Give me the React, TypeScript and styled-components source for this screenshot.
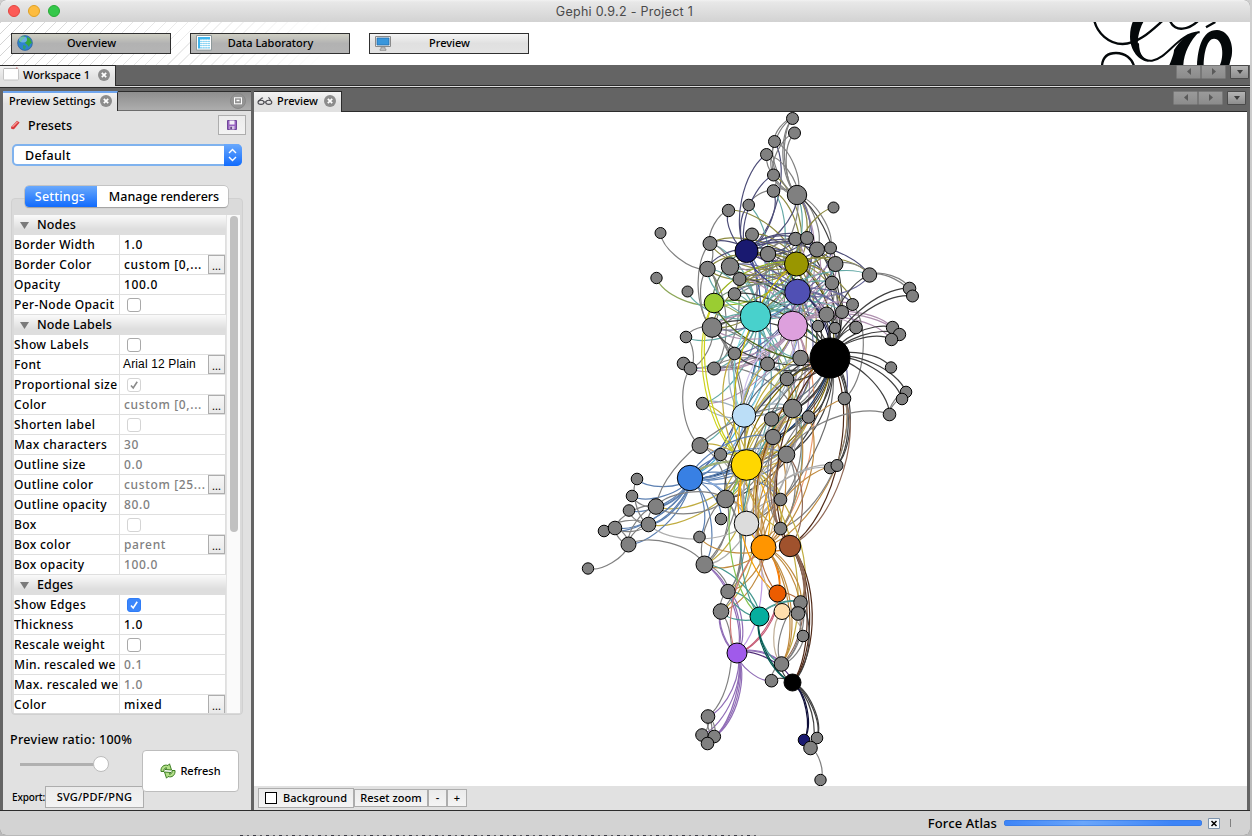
import React from "react";
import styled, { createGlobalStyle, css } from "styled-components";

const Global = createGlobalStyle`
  * { box-sizing: border-box; }
  html, body { margin: 0; padding: 0; background: #c4c4c4; overflow: hidden; }
  body { font-family: "Noto Sans", "Open Sans", sans-serif; color: #000; }
`;

/* ---------- window chrome ---------- */
const Desktop = styled.div`
  width: 1252px;
  height: 836px;
  padding-right: 2px;
  background: repeating-linear-gradient(90deg, #3a3a44 0 3px, #b9b9b9 3px 7px, #55555c 7px 9px, #c4c4c4 9px 13px) 240px 835px / 520px 1px no-repeat,
    linear-gradient(#cfcfcf, #b9b9b9);
`;
const Window = styled.div`
  width: 1250px;
  height: 835px;
  display: flex;
  flex-direction: column;
  border-radius: 6px;
  overflow: hidden;
  background: #646464;
`;
const TitleBar = styled.header`
  height: 22px;
  flex: none;
  display: grid;
  grid-template-columns: 1fr auto 1fr;
  align-items: center;
  padding: 0 9px 0 8px;
  background: linear-gradient(#f2f2f2, #e8e8e8 2px, #d2d2d2);
`;
const Lights = styled.div`
  display: flex;
  gap: 8px;
`;
const Light = styled.i<{ $fill: string; $edge: string }>`
  width: 12px;
  height: 12px;
  border-radius: 50%;
  background: ${(p) => p.$fill};
  border: 1px solid ${(p) => p.$edge};
`;
const Title = styled.h1`
  margin: 2px 0 0;
  font: 400 12.5px/20px Inter, sans-serif;
  letter-spacing: 0.28px;
  color: #4a4a4a;
`;

/* ---------- perspective toolbar ---------- */
const Banner = styled.nav`
  height: 43px;
  flex: none;
  display: flex;
  align-items: center;
  gap: 19px;
  padding: 0 8px 0 11px;
  background: linear-gradient(90deg, rgba(255, 255, 255, 0), #fff 330px),
    repeating-linear-gradient(135deg, #d4d4d4 0 1px, #fff 1px 7.8px);
`;
const Perspective = styled.button<{ $active?: boolean }>`
  width: 160px;
  height: 21px;
  padding: 0 0 1px 5px;
  display: grid;
  grid-template-columns: 16px 1fr 20px;
  align-items: center;
  border: 1px solid #303030;
  font: 500 11px/16px "Noto Sans", sans-serif;
  color: #000;
  background: ${(p) =>
    p.$active ? "linear-gradient(#f4f4f4, #e0e0e0 50%, #e3e3e3)" : "linear-gradient(#cfcfc4, #b2b2b2 50%, #b4b4b4)"};
`;
const Spacer = styled.div`
  flex: 1;
`;
const Logo = styled.svg`
  flex: none;
  width: 150px;
  height: 43px;
`;

/* ---------- tabs ---------- */
const WorkspaceBar = styled.div`
  height: 23px;
  flex: none;
  display: flex;
  justify-content: space-between;
  background: linear-gradient(#646464 20px, #2c2c2c 20px 21px, #dcdcdc 21px 22px, #2c2c2c 22px);
`;
const TabStrip = styled.div`
  height: 21px;
  flex: none;
  display: flex;
  justify-content: space-between;
  background: linear-gradient(#646464 20px, #2c2c2c 20px);
`;
const Tab = styled.div<{ $w: number; $focus?: boolean }>`
  width: ${(p) => p.$w}px;
  height: ${(p) => (p.$focus ? 20 : 21)}px;
  display: flex;
  align-items: center;
  padding: 0 0 3px ${(p) => (p.$focus ? 6 : 3)}px;
  gap: 4px;
  font-weight: 500;
  font-size: 11px;
  white-space: nowrap;
  border-right: 1px solid #2c2c2c;
  border-top: ${(p) => (p.$focus ? "2px solid #6fa5ee" : "1px solid #2c2c2c")};
  background: linear-gradient(#f3f3f3, #e1e1e1 60%);
  svg:last-child {
    margin-left: auto;
    margin-right: 5px;
  }
`;
const Pager = styled.div`
  display: flex;
  margin-right: 1px;
`;
const PagerButton = styled.button<{ $menu?: boolean }>`
  width: ${(p) => (p.$menu ? 19 : 25)}px;
  height: 14px;
  margin-left: ${(p) => (p.$menu ? 4 : 0)}px;
  padding: 0;
  display: grid;
  place-items: center;
  border: 1px solid ${(p) => (p.$menu ? "#4a4a4a" : "#787878")};
  border-radius: 1px;
  background: ${(p) => (p.$menu ? "linear-gradient(#b4b4b4, #8e8e8e)" : "linear-gradient(#9a9a9a, #8c8c8c)")};
`;

/* ---------- workspace ---------- */
const Work = styled.main`
  height: 722px;
  flex: none;
  display: grid;
  grid-template-columns: 248px 993px;
  column-gap: 3px;
  padding: 3px 3px 0;
  background: #646464;
`;
const Side = styled.aside`
  display: flex;
  flex-direction: column;
  background: #e1e1e1;
  overflow: hidden;
`;
const SideTabs = styled.div`
  height: 20px;
  flex: none;
  display: flex;
  justify-content: space-between;
  align-items: center;
  padding-right: 5px;
  background: linear-gradient(#2c2c2c 1px, #8e8e8e 1px, #adadad 19px, #6c6c6c 19px);
`;
const SideBody = styled.div`
  flex: 1;
  display: flex;
  flex-direction: column;
  padding: 4px 5px 0 8px;
`;
const PresetRow = styled.div`
  height: 20px;
  display: flex;
  align-items: center;
  font-size: 12.5px;
  font-weight: 500;
  span { margin-left: 8px; flex: 1; }
`;
const IconButton = styled.button`
  width: 28px;
  height: 20px;
  padding: 0;
  border: 1px solid #adadad;
  background: linear-gradient(#ececec, #f3f3f3);
  display: grid;
  place-items: center;
`;
const Select = styled.div`
  width: 230px;
  height: 22px;
  margin: 9px 0 0 1px;
  display: flex;
  justify-content: space-between;
  border-radius: 5px;
  border: 2px solid #7fb2ee;
  background: #fff;
  padding-left: 11px;
  font-size: 12.5px;
  font-weight: 500;
  line-height: 19px;
  letter-spacing: 0.25px;
  svg { margin: -2px; border-radius: 0 5px 5px 0; }
`;
const Group = styled.section`
  position: relative;
  margin: 32px 0 0;
  width: 232px;
  height: 517px;
  padding: 16px 2px 1px 2px;
  border: 1px solid #d0d0d0;
  border-radius: 4px;
  background: #dadada;
`;
const Segments = styled.div`
  position: absolute;
  left: 13px;
  top: -13px;
  width: 203px;
  height: 21px;
  display: grid;
  grid-template-columns: 72px 1fr;
  border-radius: 4px;
  overflow: hidden;
  box-shadow: 0 0 0 0.5px #a8a8a8, 0 1px 1px #9c9c9c;
  background: #fff;
  text-align: center;
  font-size: 12.5px;
  font-weight: 500;
  line-height: 21px;
`;
const Segment = styled.span<{ $on?: boolean }>`
  padding-left: ${(p) => (p.$on ? 0 : 3)}px;
  ${(p) => p.$on && css`color: #fff; letter-spacing: 0.2px; padding-right: 2px; background: linear-gradient(#6aa9fc, #116bfd);`}
`;
const Scroll = styled.div`
  height: 498px;
  display: grid;
  grid-template-columns: 212px 14px;
  overflow: hidden;
  background: #e1e1e1;
`;
const Track = styled.div`
  border-left: 1px solid #e4e4e4;
  background: #fafafa;
  padding: 1px 0 0 3px;
`;
const Thumb = styled.div`
  width: 8px;
  height: 316px;
  border-radius: 4px;
  background: #c1c1c1;
`;
const Header = styled.div`
  height: 20px;
  padding: 0 0 2px 6px;
  display: flex;
  align-items: center;
  gap: 8px;
  font-size: 12.5px;
  font-weight: 500;
  letter-spacing: 0.1px;
  background: linear-gradient(#fafafa, #dedede 70%);
  svg { margin-top: 2px; }
`;
const Row = styled.div<{ $dim?: boolean }>`
  height: 20px;
  display: grid;
  grid-template-columns: 105px 105px;
  column-gap: 1px;
  border-bottom: 1px solid #dfdfdf;
  background: #dfdfdf;
  font-size: 12px;
  font-weight: 500;
  line-height: 19px;
  white-space: nowrap;
  & > span { background: #fff; overflow: hidden; letter-spacing: 0.38px; }
  & > div { color: ${(p) => (p.$dim ? "#808080" : "#000")}; }
`;
const Value = styled.div<{ $arial?: boolean }>`
  background: #fff;
  display: flex;
  align-items: center;
  justify-content: space-between;
  padding: 0 0 0 4px;
  letter-spacing: 0.65px;
  ${(p) => p.$arial && css`font-family: "Liberation Sans", sans-serif; letter-spacing: 0.15px; padding-left: 3px;`}
`;
const More = styled.button`
  width: 17px;
  height: 19px;
  padding: 0;
  border: 1px solid #adadad;
  background: linear-gradient(#f6f6f6, #e9e9e9);
  font: 400 11px/20px "Noto Sans", sans-serif;
`;
const Box = styled.span<{ $on?: boolean; $dim?: boolean }>`
  width: 14px;
  height: 14px;
  margin-left: 3px;
  border-radius: 3px;
  border: 1px solid ${(p) => (p.$on ? "#2f7cf6" : p.$dim ? "#d4d4d4" : "#a9a9a9")};
  background: ${(p) => (p.$on ? "#3b86fb" : "#fff")};
  display: grid;
  place-items: center;
`;
const Footer = styled.div`
  display: grid;
  grid-template-columns: 131px 97px;
`;
const Ratio = styled.div`
  margin: 14px 0 0 -1px;
  height: 22px;
  font-size: 12.5px;
  font-weight: 500;
  line-height: 22px;
  letter-spacing: 0.3px;
`;
const Slider = styled.div`
  width: 89px;
  height: 17px;
  margin: 5px 0 0 9px;
  display: flex;
  justify-content: flex-end;
  background: linear-gradient(#b0b0b0, #b0b0b0) 0 7px / 76px 3px no-repeat;
  i {
    width: 16px;
    height: 16px;
    border-radius: 50%;
    background: #fff;
    border: 1px solid #bcbcbc;
  }
`;
const ExportRow = styled.div`
  display: grid;
  grid-template-columns: 33px 99px;
  align-items: center;
  margin: 13px 0 0 1px;
  font-size: 10px;
  letter-spacing: -0.15px;
  font-weight: 500;
  white-space: nowrap;
`;
const FlatButton = styled.button<{ $w: number; $h?: number; $track?: number }>`
  width: ${(p) => p.$w}px;
  height: ${(p) => p.$h ?? 18}px;
  flex: none;
  padding: 0;
  display: flex;
  align-items: center;
  justify-content: center;
  gap: 6px;
  border: 1px solid #adadad;
  background: linear-gradient(#ebebeb, #f4f4f4);
  font: 500 11px/14px "Noto Sans", sans-serif;
  letter-spacing: ${(p) => p.$track ?? 0}px;
  color: #000;
  white-space: nowrap;
`;
const Refresh = styled.button`
  align-self: start;
  width: 97px;
  height: 42px;
  margin-top: 35px;
  display: flex;
  align-items: center;
  justify-content: center;
  gap: 4px;
  padding: 0;
  border: 1px solid #bdbdbd;
  border-radius: 4px;
  background: #fff;
  font: 500 11px/16px "Noto Sans", sans-serif;
  color: #000;
  z-index: 1;
`;

const Stage = styled.section`
  display: flex;
  flex-direction: column;
`;
const Canvas = styled.svg`
  flex: none;
  width: 993px;
  height: 674px;
  background: #fff;
`;
const StageBar = styled.div`
  height: 24px;
  display: flex;
  align-items: center;
  padding-left: 4px;
  background: #e1e1e1;
`;
const Swatch = styled.i`
  width: 12px;
  height: 12px;
  border: 1px solid #000;
  background: #fff;
`;
const Status = styled.footer`
  height: 25px;
  flex: none;
  display: flex;
  align-items: center;
  justify-content: flex-end;
  padding-right: 19px;
  border-top: 1px solid #2c2c2c;
  background: #d3d3d3;
  font-size: 13px;
  font-weight: 500;
  letter-spacing: 0.1px;
`;
const Progress = styled.div`
  width: 198px;
  height: 6px;
  margin: 0 6px 0 7px;
  border-radius: 3px;
  background: linear-gradient(90deg, #3d84f7, #6aa6fb 40%, #3d84f7 85%);
  box-shadow: inset 0 0 0 0.5px #3576dd;
`;
const Grip = styled.i`
  width: 1px;
  height: 8px;
  margin-left: 10px;
  background: #808080;
`;

/* ---------- small drawings ---------- */
const Close = () => (
  <svg width="12" height="12" viewBox="0 0 12 12">
    <circle cx="6" cy="6" r="6" fill="#8c8c8c" />
    <path d="M3.8 3.8l4.4 4.4M8.2 3.8L3.8 8.2" stroke="#fff" strokeWidth="1.7" />
  </svg>
);
const Globe = () => (
  <svg width="16" height="16" viewBox="0 0 16 16">
    <circle cx="8" cy="8" r="7.4" fill="#2f83cf" stroke="#2b5f96" strokeWidth=".7" />
    <path d="M3 3Q5 1 8 1L7.500 3 5.500 4.500 4 7 2 7.500zM10 2l3 1.500 2 4.500-2 1-1 3-2-2.500-2-1.500 2-2.500z" fill="#35a83c" />
    <path d="M6 10l3 1-1 3.500-2-1z" fill="#2fa06a" />
    <ellipse cx="6" cy="4.5" rx="4" ry="3" fill="#9fd6fa" opacity=".55" />
  </svg>
);
const Sheet = () => (
  <svg width="16" height="16" viewBox="0 0 16 16">
    <path d="M.5.5h15v14.6H.5z" fill="#fff" stroke="#8f9a9c" />
    <path d="M2 2h12v2H2zM2 4h2v9.500H2z" fill="#3fb5ee" />
    <path d="M4 4h10v9.500H4z" fill="#a9e0f8" />
    <path d="M4 5.500h10M4 7.500h10M4 9.500h10M4 11.500h10M6.500 4v9.500M9 4v9.500M11.500 4v9.500" stroke="#fff" strokeWidth=".8" />
    <path d="M4 4.500h10M4 6.500h10M4 8.500h10M4 10.500h10M4 12.800h10" stroke="#79cdf2" strokeWidth=".6" />
  </svg>
);
const Monitor = () => (
  <svg width="16" height="16" viewBox="0 0 16 16">
    <path d="M.5 1.5h15v10H.5z" fill="#e8e8e8" stroke="#8a8a8a" />
    <path d="M2 3h12v7H2z" fill="#3a97dc" stroke="#2067a8" strokeWidth=".7" />
    <path d="M6 12h4v2h1v1.5H5V14h1z" fill="#bbb" stroke="#888" strokeWidth=".6" />
  </svg>
);
const WorkspaceIcon = () => (
  <svg width="16" height="15" viewBox="0 0 16 15">
    <rect x=".5" y="1.5" width="15" height="11.5" rx="1" fill="#fff" stroke="#c4c4c4" />
    <path d="M1 1.5h14" stroke="#b4b4b4" />
    <path d="M13 1h1.5" stroke="#c66" />
  </svg>
);
const Glasses = () => (
  <svg width="16" height="10" viewBox="0 0 16 10" fill="none" stroke="#4a4a50" strokeWidth="1.1">
    <ellipse cx="4" cy="6.3" rx="3" ry="2.1" />
    <ellipse cx="11.8" cy="6.3" rx="3" ry="2.1" />
    <path d="M7 6h2M1.2 5.5L5 1.8M13.8 4.5L11.5 1.2M5 1.8l1 .6" />
  </svg>
);
const Arrow = ({ d, c = "#5a5a5a" }: { d: string; c?: string }) => (
  <svg width="8" height="8" viewBox="0 0 8 8">
    <path d={d} fill={c} />
  </svg>
);
const Caret = () => (
  <svg width="9" height="7" viewBox="0 0 9 7">
    <path d="M0 0h9L4.5 7z" fill="#7a7a7a" />
  </svg>
);
const Tick = ({ c }: { c: string }) => (
  <svg width="10" height="10" viewBox="0 0 10 10">
    <path d="M2 5.4L4.2 8 8.2 1.8" fill="none" stroke={c} strokeWidth="1.6" />
  </svg>
);

/* ---------- settings data ---------- */
type Item = {
  head?: string;
  name?: string;
  value?: string;
  check?: "on" | "off" | "dimmed";
  dim?: boolean;
  more?: boolean;
  arial?: boolean;
};
const items: Item[] = [
  { head: "Nodes" },
  { name: "Border Width", value: "1.0" },
  { name: "Border Color", value: "custom [0,...", more: true },
  { name: "Opacity", value: "100.0" },
  { name: "Per-Node Opacit", check: "off" },
  { head: "Node Labels" },
  { name: "Show Labels", check: "off" },
  { name: "Font", value: "Arial 12 Plain", more: true, arial: true },
  { name: "Proportional size", check: "dimmed", dim: true },
  { name: "Color", value: "custom [0,...", more: true, dim: true },
  { name: "Shorten label", check: "off", dim: true },
  { name: "Max characters", value: "30", dim: true },
  { name: "Outline size", value: "0.0", dim: true },
  { name: "Outline color", value: "custom [25...", more: true, dim: true },
  { name: "Outline opacity", value: "80.0", dim: true },
  { name: "Box", check: "off", dim: true },
  { name: "Box color", value: "parent", more: true, dim: true },
  { name: "Box opacity", value: "100.0", dim: true },
  { head: "Edges" },
  { name: "Show Edges", check: "on" },
  { name: "Thickness", value: "1.0" },
  { name: "Rescale weight", check: "off" },
  { name: "Min. rescaled we", value: "0.1", dim: true },
  { name: "Max. rescaled we", value: "1.0", dim: true },
  { name: "Color", value: "mixed", more: true },
];

/* ---------- graph data: x, y, radius, optional colour ---------- */
type RGB = [number, number, number];
type GraphNode = [number, number, number, RGB?];
const GRAY: RGB = [128, 128, 128];
const nodes: GraphNode[] = [
  [792.5, 118.5, 6], [794.5, 133, 6], [774.5, 141.5, 6], [766.5, 154.5, 6], [773.5, 175, 6],
  [773.5, 191, 6.3], [797, 195, 9.7], [748.7, 205, 5.8], [728.5, 210.5, 6.2], [833.5, 207.5, 5.5],
  [752, 234.5, 6.5], [710, 243.5, 7], [746.5, 251, 11.5, [25, 25, 112]], [768, 254, 7.7], [795.5, 239, 6.7],
  [807, 238, 6.5], [817, 249.5, 7.5], [830.5, 248, 6], [796.5, 264, 12, [153, 150, 0]], [660.5, 233, 5.5],
  [707.5, 269, 7.7], [730, 266.5, 8.7], [739.5, 279, 6.5], [835.5, 264, 7.5], [869.5, 275, 7.2],
  [909.5, 288.5, 6.3], [912.5, 296, 6], [656.5, 278, 5.7], [687.5, 291.5, 5.5], [734.5, 294, 6.3],
  [832, 283, 6.8], [714, 303, 9.8, [154, 205, 50]], [755.5, 316.5, 15.3, [72, 209, 204]], [797.5, 292, 12.8, [80, 80, 180]], [792.7, 326, 14.8, [221, 160, 221]],
  [712, 327.5, 9.8], [826.5, 314.5, 7.5], [842, 312, 6.5], [852.5, 304.5, 6], [818, 326, 5.8],
  [835, 328, 5.7], [856, 327.5, 6.3], [892.5, 327.5, 6.2], [899.5, 334.5, 6.2], [891.5, 339.5, 6.2],
  [830, 358, 20, [0, 0, 0]], [686, 337, 5.8], [734.5, 353.5, 6.3], [683.5, 363.5, 6.3], [690.5, 368.5, 6.3],
  [714, 368.5, 6.5], [767.5, 364, 7], [800.5, 358, 7.7], [787, 379, 6.8], [891, 367.5, 5.7],
  [906, 392, 5.8], [902, 399, 5.8], [889.5, 414.5, 6.3], [844.5, 398.5, 6.3], [702.5, 403.5, 6.2],
  [744, 415.5, 11.7, [187, 222, 247]], [792.5, 408.5, 9.3], [771.5, 419, 7.2], [808.5, 417, 6.3], [773, 437, 7.7],
  [700, 445.5, 8], [786.5, 454.5, 8.3], [720.5, 454.5, 6.2], [746.5, 465, 15.3, [255, 215, 0]], [690, 478, 12.7, [56, 128, 228]],
  [830, 468, 5.8], [837, 465.5, 6], [637, 479, 5.8], [632, 496, 5.8], [629, 510.5, 5.8],
  [656, 506.5, 7.8], [648.5, 524.5, 7.3], [604, 531, 5.8], [615, 528, 6.8], [628.5, 544.5, 7.5],
  [588, 568.5, 5.7], [725.5, 499, 8.8], [780.5, 499.5, 6.3], [721, 519, 5.8], [746.5, 523.5, 12.3, [220, 220, 220]],
  [780.5, 528.5, 6.3], [699.5, 537, 5.8], [763.5, 547.5, 12.5, [255, 149, 0]], [790, 546, 10.7, [160, 82, 45]], [704.5, 564.5, 8.5],
  [728, 591.5, 7.2], [777.5, 593.5, 8.5, [236, 92, 0]], [721, 611.5, 7.8], [759.5, 616.5, 9.5, [6, 174, 158]], [782, 611.5, 8, [255, 222, 173]],
  [800.5, 602.5, 6.8], [798, 613.5, 6.8], [803, 636, 5.8], [737, 653, 10, [160, 90, 235]], [781.5, 664, 7.3],
  [771.5, 680.7, 6.3], [792.5, 682.5, 8.5, [0, 0, 0]], [708, 716.5, 6.8], [702, 735, 6.3], [714.3, 736.5, 6.3],
  [707.5, 743.5, 6.3], [804, 740, 5.8, [25, 25, 112]], [817, 738, 5.8], [810.5, 748, 6.8], [820.5, 780, 5.7],
];
/* source: targets */
const links: Record<number, number[]> = {
  2: [0, 12, 6],
  3: [6, 4],
  4: [0, 1, 5, 18],
  5: [32, 6, 18, 12],
  6: [0, 0, 1, 2, 3, 4, 16, 17, 15, 18, 12, 34, 32, 33, 45, 29],
  7: [5, 32],
  8: [18],
  10: [32, 18],
  11: [8, 12, 32, 18, 21, 20],
  12: [3, 4, 7, 8, 14, 15, 16, 24, 69, 33, 18, 34, 60, 23, 30, 45, 47],
  13: [15, 14, 32, 34, 45, 51, 35],
  14: [12, 32, 18, 34, 45, 22],
  15: [12, 33, 45, 21],
  16: [18, 32, 34, 45, 12],
  17: [33, 34, 18],
  18: [9, 24, 23, 11, 20, 21, 22, 30, 37, 38, 36, 35, 45, 32, 31, 60, 61, 51],
  20: [19, 12, 18, 32, 31, 35, 50],
  21: [32, 18, 34, 33, 50],
  22: [33, 34, 32, 45],
  23: [33, 34, 32, 24],
  24: [25, 26, 33],
  29: [18, 32, 33, 45],
  30: [32, 34, 39, 61],
  31: [27, 18, 33, 12, 45, 61, 32],
  32: [28, 46, 49, 20, 47, 50, 59, 60, 65, 69, 36, 37, 39, 40, 30, 62, 85, 81, 45, 34, 24],
  33: [38, 36, 37, 12, 32, 47, 50, 58, 61, 60, 45, 51, 35, 68, 41],
  34: [42, 43, 44, 49, 48, 50, 47, 60, 61, 62, 87, 66, 30, 23, 38, 41, 35, 59],
  35: [11, 20, 32, 34, 45, 61, 49, 81, 89, 18, 67],
  38: [58],
  45: [24, 25, 26, 42, 43, 44, 54, 55, 56, 57, 71, 71, 88, 63, 61, 61, 62, 64, 64, 66, 53, 52, 51, 47, 68, 81, 84, 60, 35, 31, 58, 36, 37, 39, 40, 41, 69],
  46: [49, 35],
  49: [48],
  50: [61, 51],
  52: [32, 34, 53, 60],
  53: [60, 45, 68],
  57: [55, 56],
  58: [88, 87, 85],
  59: [60, 68],
  60: [51, 47, 61, 62, 45, 52, 67, 59, 69, 84, 87, 32, 34],
  61: [62, 69, 68, 84, 87, 66, 82],
  62: [69, 68, 64, 84],
  63: [68, 69, 87],
  64: [69, 68, 87, 81],
  65: [49, 81, 68, 87, 84],
  66: [57, 69, 68, 85, 84, 88],
  67: [69, 68, 90],
  68: [31, 31, 75, 76, 61, 51, 52, 53, 47, 62, 64, 63, 66, 81, 82, 85, 84, 87, 92, 90, 89, 45, 99, 95, 18],
  69: [72, 73, 74, 75, 76, 77, 78, 79, 86, 89, 81, 83, 68, 68, 64, 66, 84, 75, 76, 82],
  75: [73, 81, 61],
  76: [72, 75, 78, 74],
  77: [76],
  78: [75, 79],
  79: [80, 89, 76, 78, 75],
  81: [75, 84, 87, 92, 90, 89, 45, 66, 68],
  84: [76, 71, 70, 45, 61, 64, 82, 66, 89, 98],
  85: [61, 68, 63],
  87: [86, 89, 90, 92, 91, 91, 95, 96, 99, 99, 61, 45, 58, 68, 66, 71, 85, 82],
  88: [101, 101, 101, 95, 99, 87, 45, 61, 66, 96],
  89: [93, 98, 90, 98, 81],
  90: [93, 98],
  91: [98, 98, 68, 61, 95],
  92: [102, 90],
  93: [92, 90, 95, 95, 68, 61],
  94: [97, 61, 91],
  95: [99, 101],
  96: [99],
  97: [99],
  98: [92, 92, 99, 99, 101, 102, 103, 104, 104, 104, 87],
  99: [94, 95, 93],
  100: [98, 99, 101],
  101: [93, 93, 99, 106, 106, 107, 107, 108],
  102: [103, 104, 105],
  104: [102],
  108: [109],
};
const colorOf = (n: GraphNode): RGB => n[3] ?? GRAY;
const rgb = (c: RGB) => `rgb(${c.map((v) => Math.round(v)).join(",")})`;

/* cubic arc whose handles lie a fifth of the length along and beside the chord */
const arc = (a: GraphNode, b: GraphNode, bend: number) => {
  const dx = b[0] - a[0];
  const dy = b[1] - a[1];
  const nx = dy * bend;
  const ny = -dx * bend;
  return `M${a[0]} ${a[1]}C${a[0] + dx * 0.2 + nx} ${a[1] + dy * 0.2 + ny} ${b[0] - dx * 0.2 + nx} ${b[1] - dy * 0.2 + ny} ${b[0]} ${b[1]}`;
};

const Graph = () => (
  <Canvas viewBox="254 112 993 674">
    <g fill="none" strokeWidth="1.2">
      {Object.entries(links).flatMap(([from, tos]) =>
        tos.map((to, i) => {
          const a = nodes[+from];
          const b = nodes[to];
          const ca = colorOf(a);
          const cb = colorOf(b);
          const mix = ca.map((v, k) => (v + cb[k]) / 2) as RGB;
          const repeats = tos.slice(0, i).filter((t) => t === to).length;
          return <path key={`${from}-${i}`} d={arc(a, b, 0.205 - repeats * 0.025)} stroke={rgb(mix)} />;
        })
      )}
    </g>
    {nodes.map((n, i) => (
      <circle key={i} cx={n[0]} cy={n[1]} r={n[2]} fill={rgb(colorOf(n))} stroke="#000" strokeWidth="1" />
    ))}
  </Canvas>
);

const PagerSet = () => (
  <Pager>
    <PagerButton><Arrow d="M6 0v7L2 3.5z" /></PagerButton>
    <PagerButton><Arrow d="M2 0v7L6 3.5z" /></PagerButton>
    <PagerButton $menu><Arrow d="M1 2h6L4 6z" c="#3c3c3c" /></PagerButton>
  </Pager>
);

export default function App() {
  return (
    <>
      <Global />
      <Desktop>
        <Window>
          <TitleBar>
            <Lights>
              <Light $fill="#fc5b57" $edge="#e2463f" />
              <Light $fill="#fdbc40" $edge="#dfa023" />
              <Light $fill="#34c84a" $edge="#27aa35" />
            </Lights>
            <Title>Gephi 0.9.2 - Project 1</Title>
          </TitleBar>
          <Banner>
            <Perspective><Globe />Overview</Perspective>
            <Perspective><Sheet />Data Laboratory</Perspective>
            <Perspective $active><Monitor />Preview</Perspective>
            <Spacer />
            <Logo viewBox="780 66 450 129">
              <g fill="none" stroke="#04080a" strokeWidth="7">
                <path d="M787 62C795 98 830 132 872 132C918 132 958 92 992 62" />
                <path d="M1014 62C1020 80 1038 88 1052 86C1072 84 1086 74 1097 64M1122 82L1150 66" />
                <path d="M810 198C812 166 834 159 852 159C880 159 900 176 906 198" />
                <path d="M918 130C918 168 935 184 960 182C1006 176 1040 98 1103 97" strokeWidth="6" />
              </g>
              <g fill="#04080a">
                <path d="M902 66H934C920 92 912 126 922 154C930 172 940 182 952 185C920 184 894 150 894 110C894 90 898 76 902 66z" />
                <path d="M1012 195C1020 176 1026 160 1026 150C1046 118 1068 100 1103 94C1074 122 1056 160 1054 195z" />
                <path d="M1095 195C1098 145 1110 90 1155 90C1194 92 1205 140 1199 168L1192 195H1164C1176 168 1174 117 1146 116C1126 116 1116 155 1115 195z" />
              </g>
            </Logo>
          </Banner>
          <WorkspaceBar>
            <Tab $w={116}><WorkspaceIcon />Workspace 1<Close /></Tab>
            <PagerSet />
          </WorkspaceBar>
          <Work>
            <Side>
              <SideTabs>
                <Tab $w={115} $focus>Preview Settings<Close /></Tab>
                <svg width="16" height="16" viewBox="0 0 16 16">
                  <circle cx="8" cy="8" r="7.5" fill="#949494" stroke="#888" />
                  <rect x="4.5" y="4.8" width="7" height="6" fill="none" stroke="#fff" />
                  <path d="M6.5 7.5h3" stroke="#fff" strokeWidth="1.4" />
                </svg>
              </SideTabs>
              <SideBody>
                <PresetRow>
                  <svg width="9" height="10" viewBox="0 0 9 10">
                    <path d="M0 7L6 .8 8.6 2.6 3 9.2.4 9z" fill="#d9393c" />
                    <path d="M1.5 6.8L6.6 1.8" stroke="#f59a96" strokeWidth="1.2" />
                  </svg>
                  <span>Presets</span>
                  <IconButton>
                    <svg width="10" height="10" viewBox="0 0 10 10">
                      <path d="M.5.5h9v9h-9z" fill="#9a66c2" stroke="#6f479a" />
                      <path d="M2.500 .5h5v4h-5z" fill="#f4f0f8" />
                      <path d="M2.5 6h5v3.5h-5z" fill="#d5c4e4" />
                      <path d="M3.4 6.8h1.4v2.4H3.4z" fill="#4b2b70" />
                    </svg>
                  </IconButton>
                </PresetRow>
                <Select>
                  Default
                  <svg width="18" height="22" viewBox="0 0 18 22">
                    <defs>
                      <linearGradient id="sel" x2="0" y2="1">
                        <stop stopColor="#6aa9fc" />
                        <stop offset="1" stopColor="#116bfd" />
                      </linearGradient>
                    </defs>
                    <path d="M0 0h18v22H0z" fill="url(#sel)" />
                    <path d="M5 9l3.500-3.500L12 9M5 13l3.500 3.500L12 13" fill="none" stroke="#fff" strokeWidth="1.4" />
                  </svg>
                </Select>
                <Group>
                  <Segments>
                    <Segment $on>Settings</Segment>
                    <Segment>Manage renderers</Segment>
                  </Segments>
                  <Scroll>
                    <div>
                      {items.map((it, i) =>
                        it.head ? (
                          <Header key={i}><Caret />{it.head}</Header>
                        ) : (
                          <Row key={i} $dim={it.dim}>
                            <span>{it.name}</span>
                            <Value $arial={it.arial}>
                              {it.check ? (
                                <Box $on={it.check === "on"} $dim={it.dim}>
                                  {it.check !== "off" && <Tick c={it.check === "on" ? "#fff" : "#8a8a8a"} />}
                                </Box>
                              ) : (
                                it.value
                              )}
                              {it.more && <More>...</More>}
                            </Value>
                          </Row>
                        )
                      )}
                    </div>
                    <Track><Thumb /></Track>
                  </Scroll>
                </Group>
                <Footer>
                  <div>
                    <Ratio>Preview ratio: 100%</Ratio>
                    <Slider><i /></Slider>
                    <ExportRow>
                      Export:
                      <FlatButton $w={99} $h={22} $track={0.25}>SVG/PDF/PNG</FlatButton>
                    </ExportRow>
                  </div>
                  <Refresh>
                    <svg width="16" height="16" viewBox="0 0 16 16" fill="#b4e08a" stroke="#3c7d22" strokeWidth="1">
                      <path d="M1 8.500C.5 4 4 1 8 2.500L9.500 .8l2 6.200-6.500-.5L6.800 5C5 4.500 3.500 6 4 8.500z" />
                      <path d="M15 7.500c.5 4.500-3 7.500-7 6L6.500 15.200l-2-6.200 6.500.5L9.200 11c1.800.5 3.300-1 2.800-3.500z" />
                    </svg>
                    Refresh
                  </Refresh>
                </Footer>
              </SideBody>
            </Side>
            <Stage>
              <TabStrip>
                <Tab $w={88}><Glasses />Preview<Close /></Tab>
                <PagerSet />
              </TabStrip>
              <Graph />
              <StageBar>
                <FlatButton $w={96} $h={20} $track={0.05}><Swatch />Background</FlatButton>
                <FlatButton $w={74} $track={0.05}>Reset zoom</FlatButton>
                <FlatButton $w={19}>-</FlatButton>
                <FlatButton $w={20}>+</FlatButton>
              </StageBar>
            </Stage>
          </Work>
          <Status>
            Force Atlas
            <Progress />
            <svg width="12" height="11" viewBox="0 0 12 11">
              <path d="M.5.5h11v10H.5z" fill="#f2f6fa" stroke="#7d93ab" />
              <path d="M3.500 3l5 5M8.500 3l-5 5" stroke="#000" strokeWidth="1.500" />
            </svg>
            <Grip />
          </Status>
        </Window>
      </Desktop>
    </>
  );
}
